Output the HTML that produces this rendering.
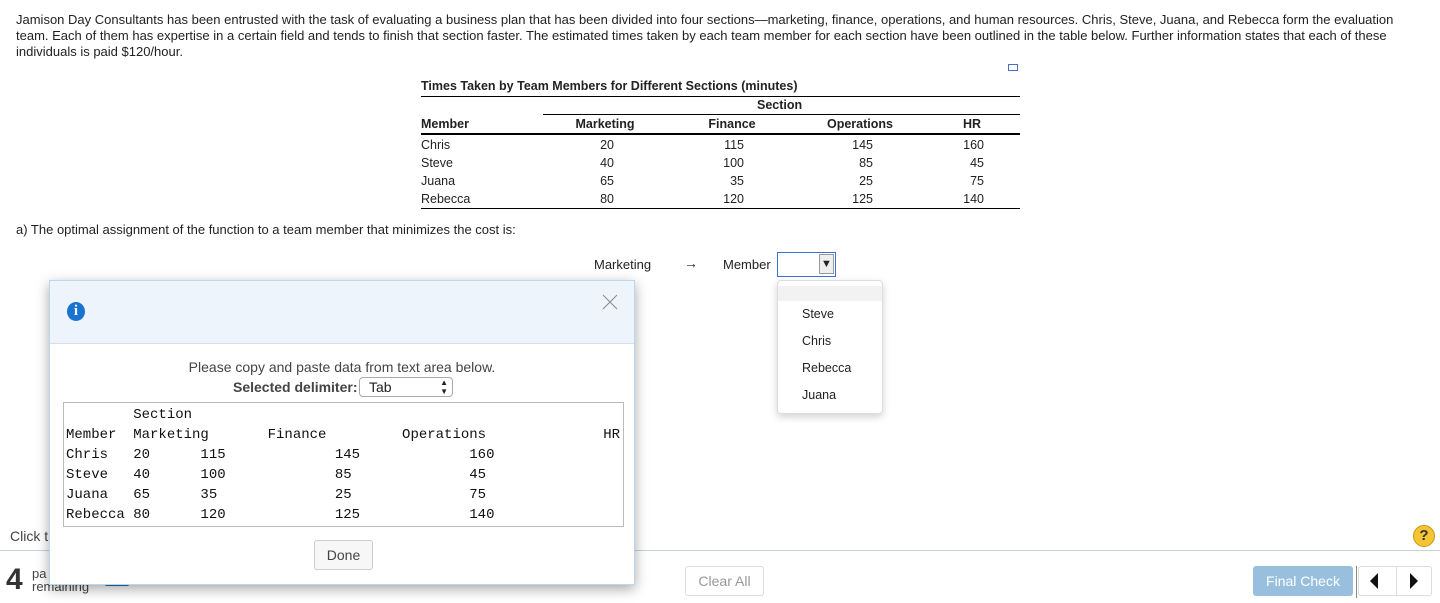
<!DOCTYPE html>
<html><head><meta charset="utf-8"><style>
*{margin:0;padding:0;box-sizing:border-box}
body{width:1440px;height:603px;position:relative;overflow:hidden;background:#fff;font-family:"Liberation Sans",Arial,sans-serif;color:#222}
.a{position:absolute;white-space:nowrap}
.p{font-size:13px;line-height:16px;left:16px;top:12px;width:1400px;white-space:normal;position:absolute}
.t{font-size:12.5px}
.b{font-weight:bold}
.r{text-align:right}
.c{text-align:center}
.mono{font-family:"Liberation Mono","DejaVu Sans Mono",monospace;font-size:14px;line-height:20px;white-space:pre;color:#111}
</style></head><body>
<div class="p">Jamison Day Consultants has been entrusted with the task of evaluating a business plan that has been divided into four sections—marketing, finance, operations, and human resources. Chris, Steve, Juana, and Rebecca form the evaluation team. Each of them has expertise in a certain field and tends to finish that section faster. The estimated times taken by each team member for each section have been outlined in the table below. Further information states that each of these individuals is paid $120/hour.</div>
<div class="a" style="left:1008px;top:64px;width:10px;height:7px;border:1.5px solid #4a6fc0"></div>
<div class="a t b" style="left:421px;top:79px">Times Taken by Team Members for Different Sections (minutes)</div>
<div class="a" style="left:421px;top:96px;width:599px;border-top:1px solid #000"></div>
<div class="a t b" style="left:757px;top:98px">Section</div>
<div class="a" style="left:543px;top:114px;width:477px;border-top:1px solid #000"></div>
<div class="a t b" style="left:421px;top:117px">Member</div>
<div class="a t b c" style="left:555px;top:117px;width:100px">Marketing</div>
<div class="a t b c" style="left:682px;top:117px;width:100px">Finance</div>
<div class="a t b c" style="left:810px;top:117px;width:100px">Operations</div>
<div class="a t b c" style="left:922px;top:117px;width:100px">HR</div>
<div class="a" style="left:421px;top:133px;width:599px;border-top:2px solid #000"></div>
<div class="a t" style="left:421px;top:136px;line-height:18px">Chris<br>Steve<br>Juana<br>Rebecca</div>
<div class="a t r" style="left:574px;top:136px;width:40px;line-height:18px">20<br>40<br>65<br>80</div>
<div class="a t r" style="left:704px;top:136px;width:40px;line-height:18px">115<br>100<br>35<br>120</div>
<div class="a t r" style="left:833px;top:136px;width:40px;line-height:18px">145<br>85<br>25<br>125</div>
<div class="a t r" style="left:944px;top:136px;width:40px;line-height:18px">160<br>45<br>75<br>140</div>
<div class="a" style="left:421px;top:208px;width:599px;border-top:1px solid #000"></div>
<div class="a" style="left:16px;top:222px;font-size:13px">a) The optimal assignment of the function to a team member that minimizes the cost is:</div>
<div class="a" style="left:594px;top:257px;font-size:13px">Marketing</div>
<div class="a" style="left:684px;top:255px;font-size:14px">→</div>
<div class="a" style="left:723px;top:257px;font-size:13px">Member</div>
<div class="a" style="left:777px;top:252px;width:59px;height:25px;border:1px solid #3b6fd6"></div>
<div class="a" style="left:819px;top:254px;width:15px;height:20px;background:#eee;border:1px solid #999;font-size:11px;text-align:center;line-height:18px">▼</div>
<div class="a" style="left:777px;top:280px;width:106px;height:134px;background:#fff;border:1px solid #ddd;border-radius:4px;box-shadow:0 3px 8px rgba(0,0,0,.18)"></div>
<div class="a" style="left:778px;top:286px;width:104px;height:15px;background:#f2f2f2"></div>
<div class="a" style="left:802px;top:301px;font-size:12.5px;line-height:27px">Steve<br>Chris<br>Rebecca<br>Juana</div>
<div class="a" style="left:0;top:550px;width:1440px;border-top:1px solid #c8d0dc"></div>
<div class="a" style="left:10px;top:528px;font-size:14px;color:#444">Click t</div>
<div class="a b" style="left:6px;top:563px;font-size:30px;color:#333">4</div>
<div class="a" style="left:32px;top:567px;font-size:13px;line-height:13px;color:#444">pa<br>remaining</div>
<div class="a" style="left:104px;top:580px;width:26px;height:6px;background:#2a6cb8;border-radius:3px"></div>
<div class="a" style="left:685px;top:566px;width:79px;height:30px;border:1px solid #ddd;border-radius:3px;font-size:14px;color:#999;text-align:center;line-height:28px">Clear All</div>
<div class="a" style="left:1253px;top:566px;width:100px;height:30px;background:#98c0de;border-radius:3px;font-size:14px;color:#fff;text-align:center;line-height:30px">Final Check</div>
<div class="a" style="left:1356px;top:566px;height:32px;border-left:1px solid #888"></div>
<div class="a" style="left:1358px;top:566px;width:74px;height:30px;border:1px solid #ddd;border-radius:3px"></div>
<div class="a" style="left:1396px;top:567px;height:28px;border-left:1px solid #ddd"></div>
<div class="a" style="left:1370px;top:573px;width:0;height:0;border-top:8px solid transparent;border-bottom:8px solid transparent;border-right:8px solid #111"></div>
<div class="a" style="left:1410px;top:573px;width:0;height:0;border-top:8px solid transparent;border-bottom:8px solid transparent;border-left:8px solid #111"></div>
<div class="a b" style="left:1413px;top:525px;width:22px;height:22px;border-radius:50%;background:#f3c433;border:1px solid #c99a10;text-align:center;line-height:20px;font-size:15px;color:#333">?</div>
<div class="a" style="left:49px;top:280px;width:586px;height:305px;background:#fff;border:1px solid #bcd6f0;box-shadow:0 4px 12px rgba(0,0,0,.35)">
  <div style="position:absolute;left:0;top:0;width:584px;height:63px;background:#eef4fc;border-bottom:1px solid #cfe0f2"></div>
  <div style="position:absolute;left:17px;top:21px;width:18px;height:19px;border-radius:50%;background:#1a73d0;color:#fff;font-family:'Liberation Serif',serif;font-weight:bold;font-size:15px;text-align:center;line-height:19px">i</div>
  <svg style="position:absolute;left:552px;top:13px" width="16" height="16"><path d="M1 1L15 15M15 1L1 15" stroke="#888" stroke-width="1"/></svg>
  <div style="position:absolute;left:0;top:78px;width:584px;text-align:center;font-size:14px;color:#444">Please copy and paste data from text area below.</div>
  <div style="position:absolute;left:183px;top:98px;font-size:14px;font-weight:bold;color:#444">Selected delimiter:</div>
  <div style="position:absolute;left:309px;top:96px;width:94px;height:20px;border:1px solid #aaa;border-radius:4px;font-size:14px;padding-left:9px;line-height:18px">Tab<span style="position:absolute;right:4px;top:0;font-size:8px;line-height:9px">▲<br>▼</span></div>
  <div style="position:absolute;left:13px;top:121px;width:561px;height:125px;border:1px solid #bbb" class="mono"><div style="position:absolute;left:2px;top:2px">        Section
Member  Marketing       Finance         Operations</div><div style="position:absolute;right:3px;top:22px">HR</div><div style="position:absolute;left:2px;top:42px">Chris   20      115             145             160
Steve   40      100             85              45
Juana   65      35              25              75
Rebecca 80      120             125             140</div></div>
  <div style="position:absolute;left:264px;top:259px;width:59px;height:30px;border:1px solid #ccc;border-radius:3px;background:#f7f7f7;font-size:14px;color:#444;text-align:center;line-height:28px">Done</div>
</div>
</body></html>
